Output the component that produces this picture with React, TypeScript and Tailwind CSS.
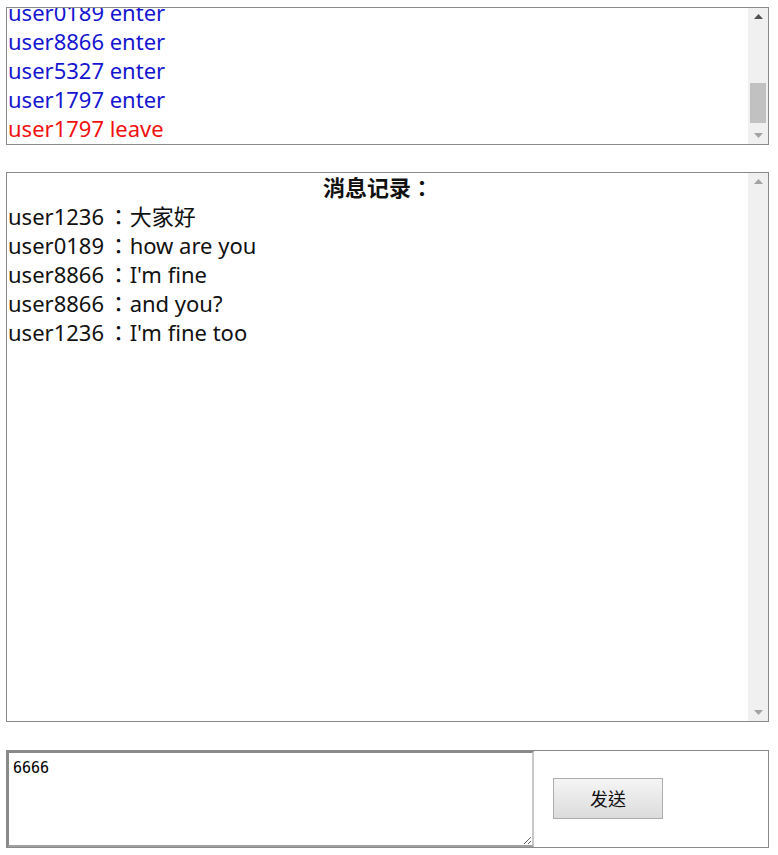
const font = { fontFamily: '"Noto Sans", "Noto Sans CJK TC", sans-serif' }

const events = [
  { text: 'user5021 enter', leave: false },
  { text: 'user1236 enter', leave: false },
  { text: 'user0189 enter', leave: false },
  { text: 'user8866 enter', leave: false },
  { text: 'user5327 enter', leave: false },
  { text: 'user1797 enter', leave: false },
  { text: 'user1797 leave', leave: true },
]

const messages = [
  ['user1236', '大家好'],
  ['user0189', 'how are you'],
  ['user8866', "I'm fine"],
  ['user8866', 'and you?'],
  ['user1236', "I'm fine too"],
]

const Arrow = ({ up, dark }: { up?: boolean; dark?: boolean }) => (
  <div className="flex h-[17px] items-center justify-center">
    <svg width="9" height="5" viewBox="0 0 9 5">
      <polygon
        points={up ? '0,5 9,5 4.5,0' : '0,0 9,0 4.5,5'}
        fill={dark ? '#505050' : '#a3a3a3'}
      />
    </svg>
  </div>
)

const Scrollbar = ({ thumb }: { thumb?: boolean }) => (
  <div className="flex w-[20px] shrink-0 flex-col bg-[#f0f0f0]">
    <Arrow up dark={thumb} />
    <div className="flex flex-1 flex-col px-[2px]">
      {thumb && <div className="mt-[58px] h-[40px] bg-[#c1c1c1]" />}
    </div>
    <Arrow />
  </div>
)

export default function App() {
  return (
    <div className="min-h-[855px] bg-white pl-[6px] pr-[9px] pt-[7px] text-[22px] leading-[29px]" style={font}>
      {/* online users */}
      <div className="flex h-[138px] border border-[#8a8a8a]">
        <div className="flex flex-1 flex-col justify-end overflow-hidden pb-[1px] pl-[1px]">
          {events.map((e, i) => (
            <div key={i} className={e.leave ? 'text-[#f01010]' : 'text-[#1515d0]'}>
              {e.text}
            </div>
          ))}
        </div>
        <Scrollbar thumb />
      </div>

      {/* history */}
      <div className="mt-[27px] flex h-[550px] border border-[#8a8a8a]">
        <div className="flex flex-1 flex-col pl-[1px] text-[#111]">
          <div className="text-center font-bold">消息记录：</div>
          {messages.map(([u, m], i) => (
            <div key={i}>
              {u}&thinsp;：{m}
            </div>
          ))}
        </div>
        <Scrollbar />
      </div>

      {/* input */}
      <div className="mt-[28px] flex h-[98px] border border-[#8a8a8a]">
        <textarea
          defaultValue="6666"
          className="h-full w-[527px] resize border-2 border-t-[#8a8a8a] border-l-[#8a8a8a] border-b-[#a0a0a0] border-r-[#c8c8c8] px-[4px] py-[5px] text-[15px] leading-[20px] text-black outline-none"
          style={{ fontFamily: '"DejaVu Sans Mono", monospace' }}
        />
        <div className="flex flex-1 items-center pl-[19px]">
          <button className="mb-[2px] h-[41px] w-[110px] border border-[#adadad] bg-gradient-to-b from-[#f5f5f5] to-[#dcdcdc] pt-[2px] text-[18px] text-[#111]">
            发送
          </button>
        </div>
      </div>
    </div>
  )
}
